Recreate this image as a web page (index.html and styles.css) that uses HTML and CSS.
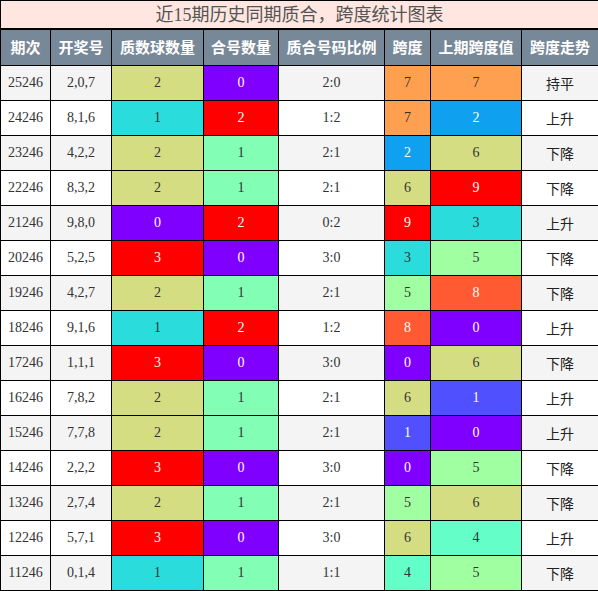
FILE: index.html
```html
<!DOCTYPE html>
<html lang="zh-CN">

<head>
    <meta charset="UTF-8">
    <meta name="viewport" content="width=device-width, initial-scale=1.0">
    <title>跨度统计图表</title>
    <link rel="stylesheet" href="styles.css">
</head>

<body>
    <table class="chart">
        <colgroup>
            <col class="w-issue">
            <col class="w-draw">
            <col class="w-prime">
            <col class="w-comp">
            <col class="w-ratio">
            <col class="w-span">
            <col class="w-prev">
            <col class="w-trend">
        </colgroup>
        <thead>
            <tr class="title-row">
                <th colspan="8" class="title">近15期历史同期质合，跨度统计图表</th>
            </tr>
            <tr class="head-row">
                <th>期次</th>
                <th>开奖号</th>
                <th>质数球数量</th>
                <th>合号数量</th>
                <th>质合号码比例</th>
                <th>跨度</th>
                <th>上期跨度值</th>
                <th>跨度走势</th>
            </tr>
        </thead>
        <tbody>
            <tr>
                <td>25246</td><td>2,0,7</td>
                <td class="olive">2</td><td class="purple">0</td>
                <td>2:0</td><td class="orange">7</td><td class="orange">7</td>
                <td class="trend">持平</td>
            </tr>
            <tr>
                <td>24246</td><td>8,1,6</td>
                <td class="cyan">1</td><td class="red">2</td>
                <td>1:2</td><td class="orange">7</td><td class="blue">2</td>
                <td class="trend">上升</td>
            </tr>
            <tr>
                <td>23246</td><td>4,2,2</td>
                <td class="olive">2</td><td class="mint">1</td>
                <td>2:1</td><td class="blue">2</td><td class="olive">6</td>
                <td class="trend">下降</td>
            </tr>
            <tr>
                <td>22246</td><td>8,3,2</td>
                <td class="olive">2</td><td class="mint">1</td>
                <td>2:1</td><td class="olive">6</td><td class="red">9</td>
                <td class="trend">下降</td>
            </tr>
            <tr>
                <td>21246</td><td>9,8,0</td>
                <td class="purple">0</td><td class="red">2</td>
                <td>0:2</td><td class="red">9</td><td class="cyan">3</td>
                <td class="trend">上升</td>
            </tr>
            <tr>
                <td>20246</td><td>5,2,5</td>
                <td class="red">3</td><td class="purple">0</td>
                <td>3:0</td><td class="cyan">3</td><td class="lgreen">5</td>
                <td class="trend">下降</td>
            </tr>
            <tr>
                <td>19246</td><td>4,2,7</td>
                <td class="olive">2</td><td class="mint">1</td>
                <td>2:1</td><td class="lgreen">5</td><td class="tomato">8</td>
                <td class="trend">下降</td>
            </tr>
            <tr>
                <td>18246</td><td>9,1,6</td>
                <td class="cyan">1</td><td class="red">2</td>
                <td>1:2</td><td class="tomato">8</td><td class="purple">0</td>
                <td class="trend">上升</td>
            </tr>
            <tr>
                <td>17246</td><td>1,1,1</td>
                <td class="red">3</td><td class="purple">0</td>
                <td>3:0</td><td class="purple">0</td><td class="olive">6</td>
                <td class="trend">下降</td>
            </tr>
            <tr>
                <td>16246</td><td>7,8,2</td>
                <td class="olive">2</td><td class="mint">1</td>
                <td>2:1</td><td class="olive">6</td><td class="indigo">1</td>
                <td class="trend">上升</td>
            </tr>
            <tr>
                <td>15246</td><td>7,7,8</td>
                <td class="olive">2</td><td class="mint">1</td>
                <td>2:1</td><td class="indigo">1</td><td class="purple">0</td>
                <td class="trend">上升</td>
            </tr>
            <tr>
                <td>14246</td><td>2,2,2</td>
                <td class="red">3</td><td class="purple">0</td>
                <td>3:0</td><td class="purple">0</td><td class="lgreen">5</td>
                <td class="trend">下降</td>
            </tr>
            <tr>
                <td>13246</td><td>2,7,4</td>
                <td class="olive">2</td><td class="mint">1</td>
                <td>2:1</td><td class="lgreen">5</td><td class="olive">6</td>
                <td class="trend">下降</td>
            </tr>
            <tr>
                <td>12246</td><td>5,7,1</td>
                <td class="red">3</td><td class="purple">0</td>
                <td>3:0</td><td class="olive">6</td><td class="aqua">4</td>
                <td class="trend">上升</td>
            </tr>
            <tr>
                <td>11246</td><td>0,1,4</td>
                <td class="cyan">1</td><td class="mint">1</td>
                <td>1:1</td><td class="aqua">4</td><td class="lgreen">5</td>
                <td class="trend">下降</td>
            </tr>
        </tbody>
    </table>
</body>

</html>
```

FILE: styles.css
```css
* {
    margin: 0;
    padding: 0;
    box-sizing: border-box;
}

body {
    background-color: #fff;
    font-family: "Liberation Serif", "Noto Sans CJK SC", serif;
}

.chart {
    width: 598px;
    border-collapse: collapse;
    table-layout: fixed;
    border: 1px solid #000;
}

.w-issue { width: 50px; }
.w-draw { width: 61px; }
.w-prime { width: 92px; }
.w-comp { width: 75px; }
.w-ratio { width: 106px; }
.w-span { width: 46px; }
.w-prev { width: 91px; }
.w-trend { width: 77px; }

.chart th,
.chart td {
    border: 1px solid #000;
    text-align: center;
    padding: 0;
    line-height: 20px;
}

.title-row .title {
    height: 28px;
    line-height: 24px;
    padding-top: 2px;
    background-color: #ffe6e0;
    color: #555;
    font-size: 18px;
    font-weight: normal;
    border-bottom-width: 2px;
}

.head-row th {
    height: 37px;
    background-color: #778899;
    color: #fff;
    font-family: "Noto Sans CJK SC", sans-serif;
    font-size: 15px;
    font-weight: bold;
}

.chart td {
    height: 35px;
    font-size: 14px;
    color: #333;
}

tbody tr:nth-child(odd) {
    background-color: #f4f4f4;
}

tbody tr:nth-child(even) {
    background-color: #fff;
}

.chart .trend {
    font-family: "Noto Sans CJK SC", sans-serif;
    color: #222;
}

.chart .olive { background-color: #d4dd82; }
.chart .cyan { background-color: #2adcdc; }
.chart .mint { background-color: #82ffb4; }
.chart .orange { background-color: #ffa050; }
.chart .lgreen { background-color: #a0ffa0; }
.chart .aqua { background-color: #64ffc8; }

.chart .purple { background-color: #8000ff; color: #fff; }
.chart .red { background-color: #ff0000; color: #fff; }
.chart .blue { background-color: #10a0f0; color: #fff; }
.chart .tomato { background-color: #ff5a32; color: #fff; }
.chart .indigo { background-color: #5050ff; color: #fff; }
```
